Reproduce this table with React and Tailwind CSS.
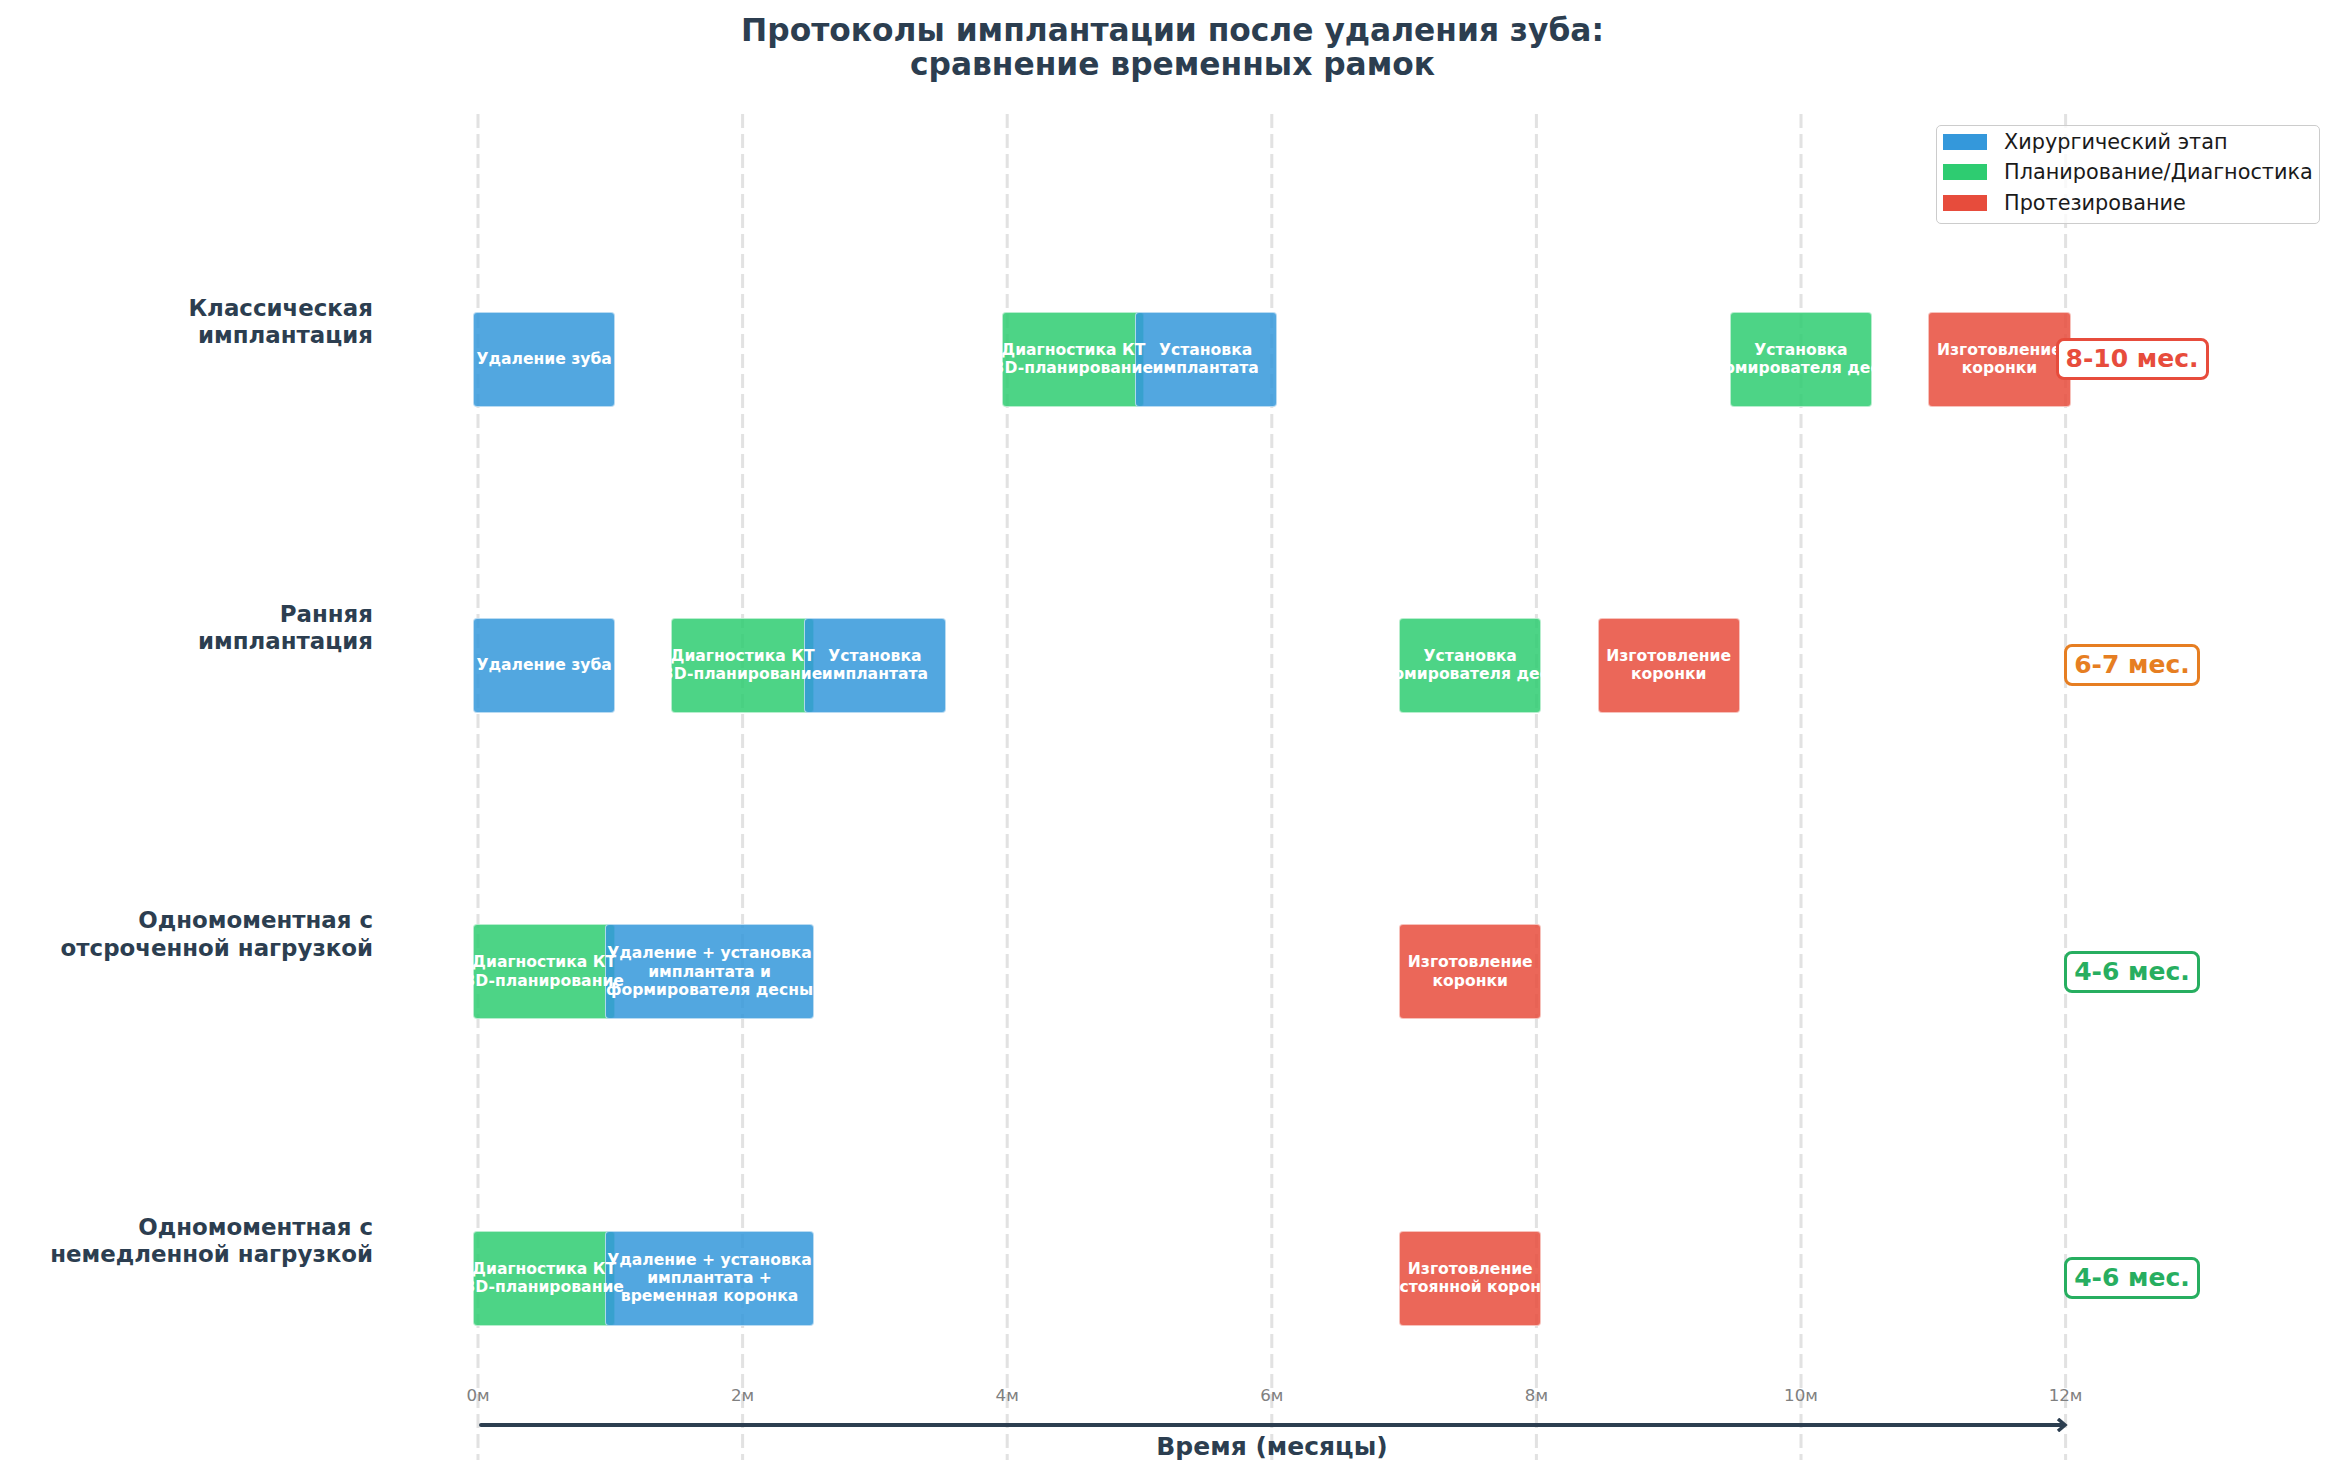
import React from "react";

const M = 132.3; // px per month
const X0 = 478;

const DIAG = ["Диагностика КТ", "3D-планирование"];
const IMPL = ["Установка", "имплантата"];
const FORM = ["Установка", "формирователя десны"];
const CROWN = ["Изготовление", "коронки"];

const rows = [
  {
    label: ["Классическая", "имплантация"],
    badge: "8-10 мес.",
    badgeCls: "text-[#e74c3c] border-[#e74c3c]",
    bars: [
      [0, 1, "b", ["Удаление зуба"]],
      [4, 5, "g", DIAG],
      [5, 6, "b", IMPL],
      [9.5, 10.5, "g", FORM],
      [11, 12, "r", CROWN],
    ],
  },
  {
    label: ["Ранняя", "имплантация"],
    badge: "6-7 мес.",
    badgeCls: "text-[#e67e22] border-[#e67e22]",
    bars: [
      [0, 1, "b", ["Удаление зуба"]],
      [1.5, 2.5, "g", DIAG],
      [2.5, 3.5, "b", IMPL],
      [7, 8, "g", FORM],
      [8.5, 9.5, "r", CROWN],
    ],
  },
  {
    label: ["Одномоментная с", "отсроченной нагрузкой"],
    badge: "4-6 мес.",
    badgeCls: "text-[#27ae60] border-[#27ae60]",
    bars: [
      [0, 1, "g", DIAG],
      [1, 2.5, "b", ["Удаление + установка", "имплантата и", "формирователя десны"]],
      [7, 8, "r", CROWN],
    ],
  },
  {
    label: ["Одномоментная с", "немедленной нагрузкой"],
    badge: "4-6 мес.",
    badgeCls: "text-[#27ae60] border-[#27ae60]",
    bars: [
      [0, 1, "g", DIAG],
      [1, 2.5, "b", ["Удаление + установка", "имплантата +", "временная коронка"]],
      [7, 8, "r", ["Изготовление", "постоянной коронки"]],
    ],
  },
];

const barBg = {
  b: "bg-[#3498db]/85",
  g: "bg-[#2ecc71]/85",
  r: "bg-[#e74c3c]/85",
};

function barStyle(s, e) {
  return { left: s * M - 5, width: (e - s) * M + 10 };
}

function Row({ row }) {
  return (
    <div className="flex items-start h-[112px]">
      <div className="w-[373px] shrink-0 text-right text-[22.9px] leading-[27.5px] font-bold text-[#2c3e50]">
        {row.label.map((l) => (
          <div key={l}>{l}</div>
        ))}
      </div>
      <div className="relative ml-[105px] w-[1588px] shrink-0 h-[112px]">
        {row.bars.map(([s, e, c], i) => (
          <div
            key={"b" + i}
            className={`absolute top-[17px] h-[95px] rounded-[4px] border-[1.5px] border-white/60 ${barBg[c]}`}
            style={barStyle(s, e)}
          />
        ))}
        {row.bars.map(([s, e, c, t], i) => (
          <div
            key={"t" + i}
            className="absolute top-[17px] h-[95px] flex flex-col items-center justify-center text-white font-bold text-[15.6px] leading-[18.3px] whitespace-nowrap"
            style={barStyle(s, e)}
          >
            {t.map((line, j) => (
              <div key={j}>{line}</div>
            ))}
          </div>
        ))}
      </div>
      <div className="relative w-[132px] shrink-0 mt-[17px] h-[95px] flex items-center justify-center">
        <div
          className={`shrink-0 whitespace-nowrap bg-white border-[3px] rounded-[8px] px-[7px] py-[3px] text-[25px] leading-[30px] font-bold ${row.badgeCls}`}
        >
          {row.badge}
        </div>
      </div>
    </div>
  );
}

export default function App() {
  const ticks = [0, 2, 4, 6, 8, 10, 12];
  return (
    <div className="relative w-[2345px] h-[1477px] bg-white overflow-hidden font-['DejaVu_Sans',sans-serif]">
      {/* dashed vertical grid */}
      <svg className="absolute left-0 top-0" width="2345" height="1477">
        {ticks.map((t) => (
          <line
            key={t}
            x1={X0 + t * M}
            x2={X0 + t * M}
            y1={114}
            y2={1460}
            stroke="#e2e2e2"
            strokeWidth="3"
            strokeDasharray="14 6"
          />
        ))}
      </svg>

      <div className="relative">
        {/* title */}
        <div className="h-[82px] pt-[13px] text-center text-[31.3px] leading-[34px] font-bold text-[#2c3e50]">
          <div>Протоколы имплантации после удаления зуба:</div>
          <div>сравнение временных рамок</div>
        </div>

        {/* rows */}
        <div className="mt-[212.7px] flex flex-col gap-[194.3px]">
          {rows.map((r, i) => (
            <Row key={i} row={r} />
          ))}
        </div>

        {/* tick labels */}
        <div className="mt-[59.4px] ml-[345.7px] flex">
          {ticks.map((t) => (
            <div
              key={t}
              className="w-[264.6px] shrink-0 text-center text-[16.7px] leading-[20px] text-[#808080]"
            >
              {t}м
            </div>
          ))}
        </div>

        {/* arrow */}
        <div className="mt-[13px] ml-[478px] w-[1600px] h-[14px]">
          <svg width="1600" height="14" viewBox="0 0 1600 14">
            <line x1="3" y1="7" x2="1585" y2="7" stroke="#2c3e50" strokeWidth="4" strokeLinecap="round" />
            <polyline
              points="1580,1 1587,7 1580,13"
              fill="none"
              stroke="#2c3e50"
              strokeWidth="3.5"
              strokeLinejoin="miter"
            />
          </svg>
        </div>

        {/* axis label */}
        <div className="ml-[478px] w-[1588px] text-center text-[25px] leading-[30px] font-bold text-[#2c3e50]">
          Время (месяцы)
        </div>
      </div>

      {/* legend */}
      <div className="absolute left-[1936px] top-[125px] w-[384px] rounded-[5px] border-[1.5px] border-[#cccccc] bg-white/80 pt-[1px] pb-[5px] pl-[6px] flex flex-col">
        {[
          ["bg-[#3498db]", "Хирургический этап"],
          ["bg-[#2ecc71]", "Планирование/Диагностика"],
          ["bg-[#e74c3c]", "Протезирование"],
        ].map(([c, t]) => (
          <div key={t} className="h-[30.3px] flex items-center">
            <div className={`w-[44px] h-[16px] ${c}`} />
            <div className="ml-[17px] text-[20.8px] leading-[24px] text-[#1a1a1a] whitespace-nowrap">{t}</div>
          </div>
        ))}
      </div>
    </div>
  );
}
